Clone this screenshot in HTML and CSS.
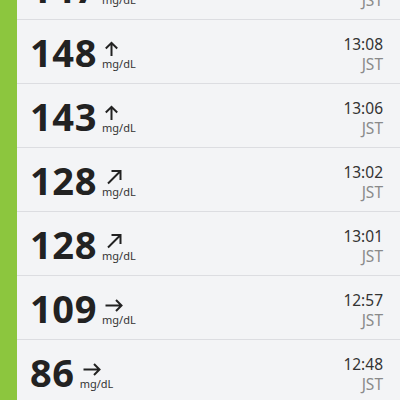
FILE: index.html
```html
<!DOCTYPE html>
<html lang="ja">

<head>
    <meta charset="UTF-8">
    <meta name="viewport" content="width=device-width, initial-scale=1.0">
    <title>血糖値の履歴</title>
    <link rel="stylesheet" href="styles.css">
</head>

<body>
    <div class="screen">
        <div class="rail"></div>
        <ul class="readings">
            <li class="row">
                <div class="reading">
                    <span class="value">147</span>
                    <div class="trend">
                        <svg class="arrow" width="22" height="16" viewBox="0 0 22 16"><path d="M9.5 15V1.8M3.8 7.5l5.7-5.7 5.7 5.7"/></svg>
                        <span class="unit">mg/dL</span>
                    </div>
                </div>
                <div class="time">
                    <span class="clock">13:11</span>
                    <span class="zone">JST</span>
                </div>
            </li>
            <li class="row">
                <div class="reading">
                    <span class="value">148</span>
                    <div class="trend">
                        <svg class="arrow" width="22" height="16" viewBox="0 0 22 16"><path d="M9.5 15V1.8M3.8 7.5l5.7-5.7 5.7 5.7"/></svg>
                        <span class="unit">mg/dL</span>
                    </div>
                </div>
                <div class="time">
                    <span class="clock">13:08</span>
                    <span class="zone">JST</span>
                </div>
            </li>
            <li class="row">
                <div class="reading">
                    <span class="value">143</span>
                    <div class="trend">
                        <svg class="arrow" width="22" height="16" viewBox="0 0 22 16"><path d="M9.5 15V1.8M3.8 7.5l5.7-5.7 5.7 5.7"/></svg>
                        <span class="unit">mg/dL</span>
                    </div>
                </div>
                <div class="time">
                    <span class="clock">13:06</span>
                    <span class="zone">JST</span>
                </div>
            </li>
            <li class="row">
                <div class="reading">
                    <span class="value">128</span>
                    <div class="trend">
                        <svg class="arrow" width="22" height="16" viewBox="0 0 22 16"><path d="M6 14.5L18.5 2M9.5 2h9v9"/></svg>
                        <span class="unit">mg/dL</span>
                    </div>
                </div>
                <div class="time">
                    <span class="clock">13:02</span>
                    <span class="zone">JST</span>
                </div>
            </li>
            <li class="row">
                <div class="reading">
                    <span class="value">128</span>
                    <div class="trend">
                        <svg class="arrow" width="22" height="16" viewBox="0 0 22 16"><path d="M6 14.5L18.5 2M9.5 2h9v9"/></svg>
                        <span class="unit">mg/dL</span>
                    </div>
                </div>
                <div class="time">
                    <span class="clock">13:01</span>
                    <span class="zone">JST</span>
                </div>
            </li>
            <li class="row">
                <div class="reading">
                    <span class="value">109</span>
                    <div class="trend">
                        <svg class="arrow" width="22" height="16" viewBox="0 0 22 16"><path d="M3.5 8.5h16M14 3l5.5 5.5L14 14"/></svg>
                        <span class="unit">mg/dL</span>
                    </div>
                </div>
                <div class="time">
                    <span class="clock">12:57</span>
                    <span class="zone">JST</span>
                </div>
            </li>
            <li class="row">
                <div class="reading">
                    <span class="value">86</span>
                    <div class="trend">
                        <svg class="arrow" width="22" height="16" viewBox="0 0 22 16"><path d="M3.5 8.5h16M14 3l5.5 5.5L14 14"/></svg>
                        <span class="unit">mg/dL</span>
                    </div>
                </div>
                <div class="time">
                    <span class="clock">12:48</span>
                    <span class="zone">JST</span>
                </div>
            </li>
        </ul>
    </div>
</body>

</html>
```

FILE: styles.css
```css
body {
    margin: 0;
    font-family: "Noto Sans", "Noto Sans CJK JP", sans-serif;
    background-color: #f3f4f6;
    color: #222222;
}

.screen {
    display: flex;
    height: 400px;
    overflow: hidden;
}

.rail {
    width: 17px;
    flex-shrink: 0;
    background-color: #8cc63e;
}

.readings {
    flex: 1;
    list-style: none;
    margin: -44px 0 0;
    padding: 0;
}

.row {
    display: flex;
    justify-content: space-between;
    align-items: center;
    height: 63px;
    padding: 0 17px 0 13px;
    border-bottom: 1px solid #dcdde1;
}

.reading {
    display: flex;
    align-items: flex-end;
    gap: 5px;
}

.value {
    font-size: 38px;
    font-weight: 700;
    line-height: 38px;
    letter-spacing: 0.6px;
}

.trend {
    display: flex;
    flex-direction: column;
    margin-bottom: 2px;
}

.arrow {
    display: block;
    flex-shrink: 0;
    width: 22px;
    height: 16px;
    margin-bottom: 1px;
    fill: none;
    stroke: #222222;
    stroke-width: 2;
}

.unit {
    font-size: 11px;
    line-height: 11px;
    color: #333333;
}

.time {
    display: flex;
    flex-direction: column;
    align-items: flex-end;
    margin-top: 4px;
    font-size: 15.5px;
    line-height: 20px;
}

.clock {
    color: #333333;
}

.zone {
    color: #8a8a8a;
}
```
